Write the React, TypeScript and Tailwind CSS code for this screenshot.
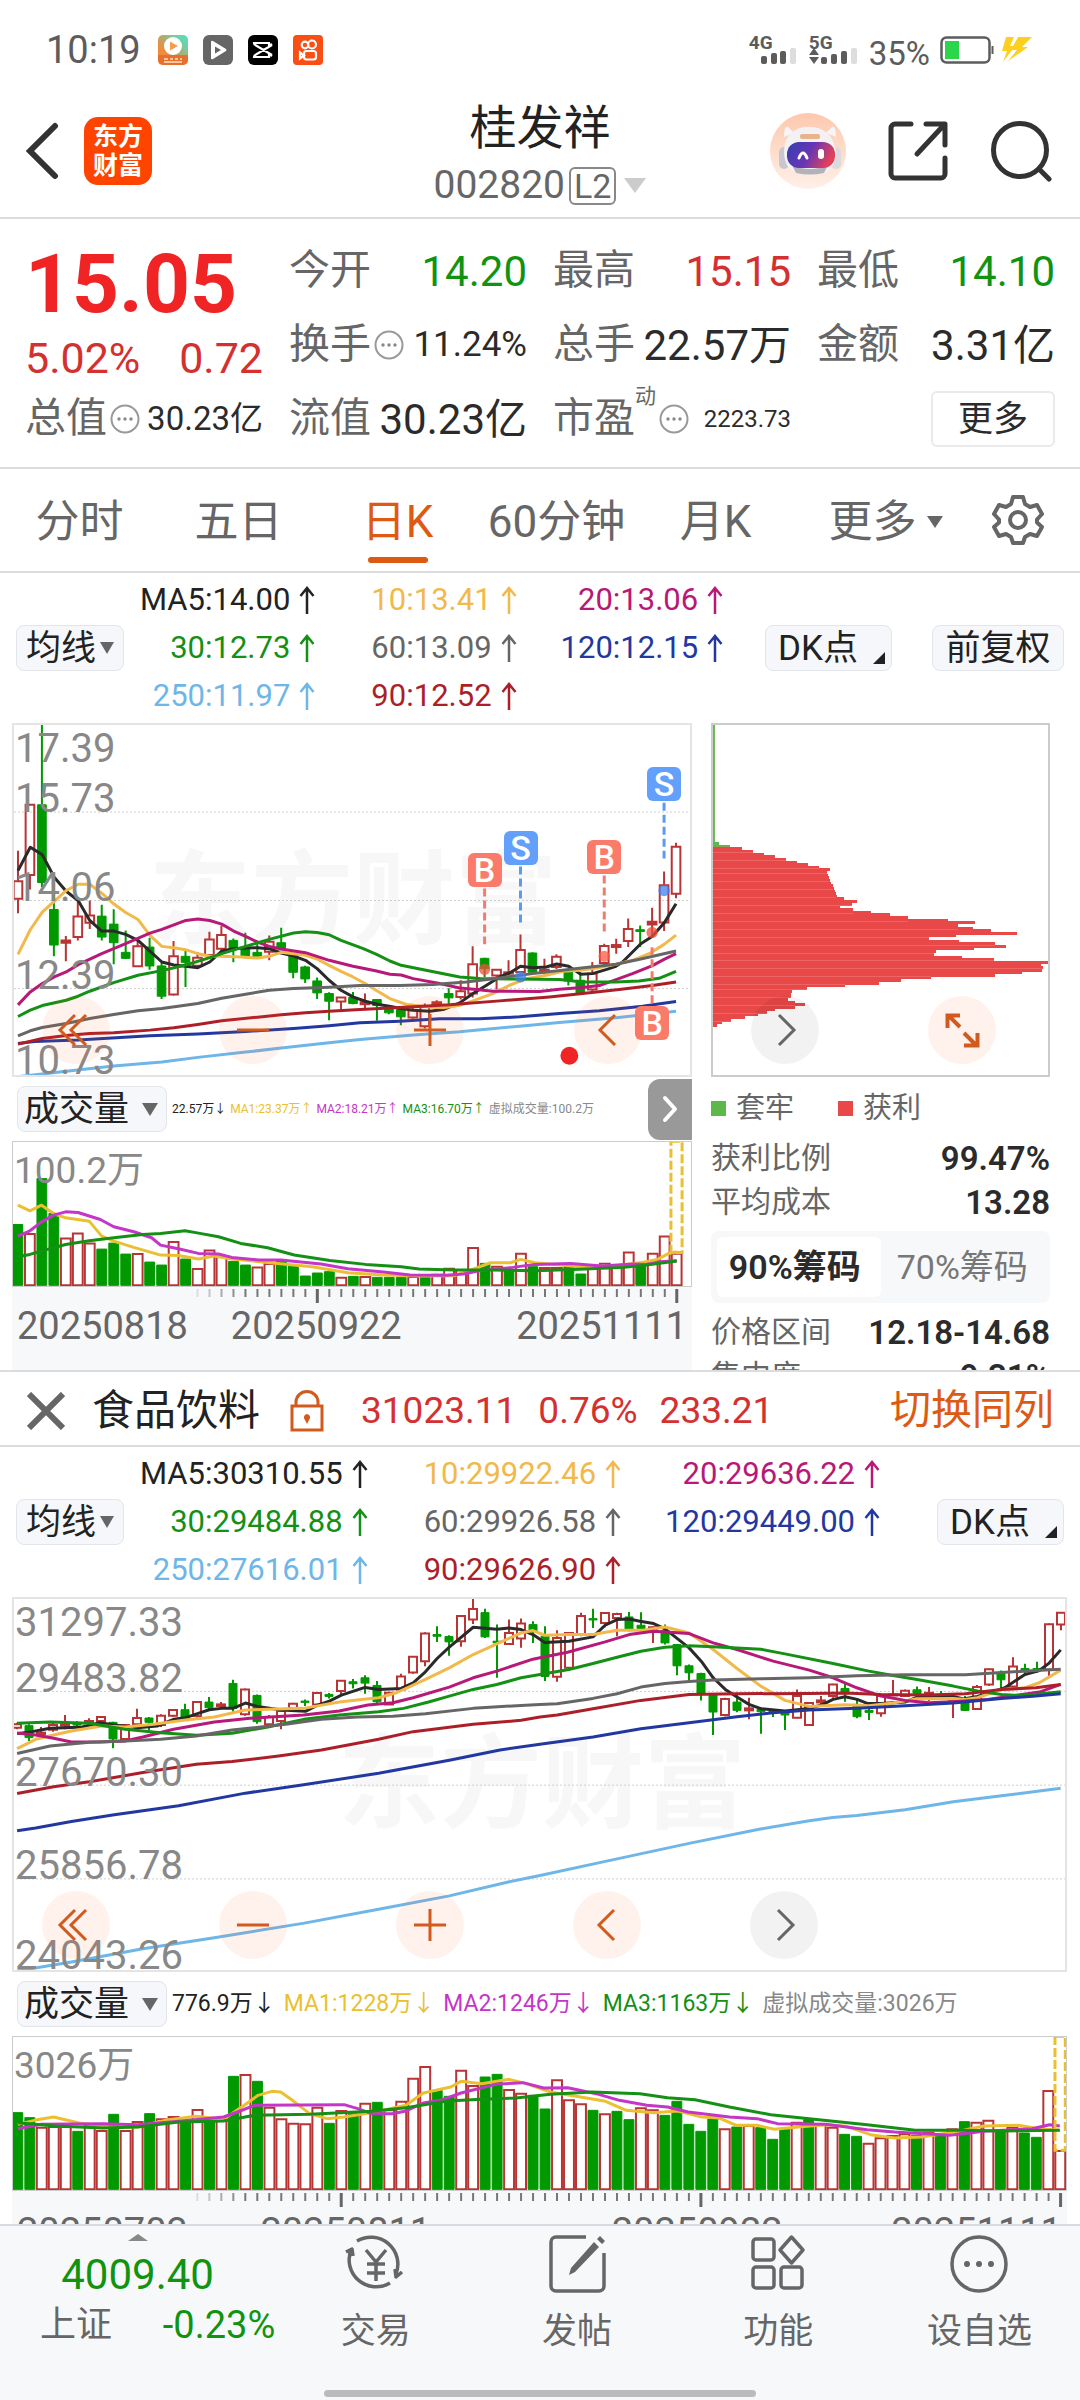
import type { ReactNode } from "react";

type Candle = [up: 0 | 1, top: number, bottom: number, high: number, low: number];
type Bar = [up: 0 | 1, top: number];
type Point = [number, number];

const RED = "#b93434";
const GREEN = "#009a00";

/* Turns "x,y x,y" into points, scaled and shifted on the x axis. */
const pts = (s: string, scale = 1, shift = 0): Point[] =>
  s.split(" ").map((p) => {
    const [x, y] = p.split(",").map(Number);
    return [x / scale + shift, y];
  });

const toPath = (points: Point[]) =>
  points.map(([x, y], i) => `${i ? "L" : "M"}${x.toFixed(1)} ${y}`).join("");

const dailyCandles: Candle[] = [
  [1, 512, 565, 420, 608], [1, 282, 493, 282, 537], [0, 282, 516, 39, 530], [0, 597, 704, 515, 738],
  [1, 690, 697, 677, 753], [1, 618, 680, 570, 690], [1, 615, 637, 570, 656], [0, 617, 680, 583, 690],
  [0, 641, 697, 596, 762], [0, 726, 744, 660, 746], [1, 708, 768, 690, 768], [0, 710, 767, 682, 778],
  [0, 767, 858, 757, 866], [1, 738, 853, 692, 856], [0, 738, 756, 720, 830], [1, 742, 766, 725, 768],
  [1, 687, 734, 664, 745], [1, 674, 715, 646, 720], [0, 690, 716, 684, 756], [0, 716, 740, 667, 744],
  [0, 726, 740, 690, 742], [1, 694, 724, 675, 750], [0, 697, 714, 652, 720], [0, 734, 786, 732, 804],
  [0, 770, 806, 766, 818], [0, 812, 848, 802, 866], [0, 850, 873, 846, 930], [1, 862, 874, 860, 898],
  [0, 862, 880, 845, 882], [1, 876, 882, 850, 900], [0, 868, 886, 868, 932], [0, 890, 908, 886, 912],
  [0, 898, 920, 896, 945], [1, 900, 922, 885, 926], [1, 890, 948, 880, 955], [1, 876, 884, 870, 886],
  [0, 850, 863, 834, 882], [1, 843, 860, 810, 868], [1, 762, 850, 708, 862], [0, 744, 775, 742, 800],
  [1, 778, 796, 776, 838], [1, 786, 790, 750, 795], [1, 719, 785, 672, 790], [0, 728, 786, 726, 790],
  [1, 778, 786, 745, 790], [1, 739, 770, 732, 776], [0, 785, 812, 780, 826], [0, 810, 848, 785, 850],
  [1, 790, 838, 755, 845], [1, 707, 758, 700, 765], [1, 704, 710, 685, 730], [1, 656, 692, 624, 710],
  [0, 658, 663, 645, 710], [1, 634, 642, 592, 680], [1, 524, 636, 483, 662], [1, 408, 550, 396, 563],
];

const dailyLines: [string, string][] = [
  ["#6fb6e8", "51,1100 196,1084 339,1068 484,1056 592,1042 736,1026 843,1014 987,998 1080,988 1240,975 1380,965 1560,948 1680,937 1850,923 1950,912 2031,903"],
  ["#2238a0", "51,1000 100,994 232,990 448,977 592,972 736,964 880,955 987,947 1080,938 1200,933 1320,926 1440,926 1560,920 1680,910 1800,902 1930,888 2031,874"],
  ["#2a2a2a", "51,480 88,410 124,432 160,500 196,542 232,570 267,630 303,662 339,662 375,672 412,690 448,722 484,755 520,764 556,768 592,772 628,755 664,722 700,715 736,713 772,712 807,715 843,728 880,737 916,750 951,775 987,810 1023,840 1059,860 1096,873 1132,882 1168,888 1204,895 1240,900 1290,903 1330,898 1380,878 1420,850 1456,828 1500,800 1530,788 1563,768 1600,772 1640,770 1672,761 1708,768 1744,792 1780,790 1820,778 1850,768 1870,755 1925,700 1959,678 1995,638 2031,580"],
  ["#f2b94a", "51,732 88,658 124,605 160,573 196,540 232,521 267,521 303,548 339,580 375,606 412,627 448,675 484,708 520,712 555,718 592,730 628,738 664,738 724,740 772,743 807,738 843,726 880,730 916,735 951,746 987,765 1023,783 1059,800 1096,820 1132,842 1170,865 1220,883 1280,890 1330,893 1380,885 1420,872 1480,850 1530,825 1580,805 1640,795 1690,783 1740,780 1800,772 1850,762 1900,750 1950,730 1995,702 2031,674"],
  ["#b81878", "51,884 88,845 124,820 160,800 196,785 232,763 303,730 375,700 448,668 484,657 556,630 592,626 628,630 664,641 700,662 736,678 772,695 807,708 843,716 916,727 987,750 1059,768 1130,782 1170,792 1204,794 1240,805 1320,820 1380,833 1430,838 1480,843 1620,844 1680,837 1750,832 1800,826 1840,812 1900,790 1960,766 1995,747 2031,730"],
  ["#149014", "51,919 88,900 124,886 196,870 232,858 267,843 339,817 412,795 484,781 556,764 628,742 664,730 736,708 807,687 880,668 916,664 951,666 987,673 1023,690 1090,715 1130,732 1170,752 1204,765 1260,776 1320,788 1380,800 1440,805 1540,806 1680,808 1750,815 1850,815 1920,812 1980,804 2031,783"],
  ["#666666", "51,977 88,962 124,952 196,940 267,925 339,913 412,902 484,895 592,880 664,864 736,852 807,840 880,835 987,831 1080,826 1200,826 1300,823 1400,815 1500,803 1600,790 1740,774 1850,762 1925,746 2031,722"],
  ["#ad1f28", "51,1002 124,985 196,976 267,970 339,968 448,960 520,953 592,943 664,932 772,921 843,914 916,908 987,903 1080,898 1200,892 1350,884 1500,872 1650,860 1750,850 1860,838 1960,826 2031,815"],
];

const sectorCandles: Candle[] = [
  [1, 430, 440, 425, 445], [0, 434, 470, 430, 480], [1, 455, 459, 438, 460], [1, 432, 446, 425, 452],
  [1, 430, 434, 402, 445], [0, 426, 432, 420, 435], [1, 420, 426, 412, 430], [1, 408, 420, 405, 422],
  [0, 424, 474, 422, 502], [1, 432, 474, 430, 476], [1, 411, 430, 383, 435], [0, 411, 424, 408, 448],
  [1, 404, 432, 400, 438], [1, 387, 404, 384, 408], [0, 386, 412, 368, 418], [1, 363, 405, 360, 410],
  [0, 363, 380, 348, 385], [1, 370, 375, 363, 380], [0, 307, 382, 296, 392], [1, 325, 400, 322, 404],
  [0, 343, 422, 340, 428], [1, 408, 430, 402, 432], [1, 390, 420, 385, 445], [1, 368, 382, 365, 385],
  [0, 360, 364, 355, 375], [1, 336, 370, 334, 372], [0, 340, 346, 336, 352], [1, 299, 330, 297, 340],
  [0, 302, 308, 294, 322], [0, 290, 306, 282, 338], [0, 313, 362, 300, 366], [1, 335, 370, 333, 370],
  [1, 286, 325, 278, 330], [1, 227, 274, 225, 278], [1, 157, 240, 153, 255], [0, 160, 165, 135, 182],
  [0, 166, 182, 162, 224], [1, 104, 180, 102, 197], [1, 83, 115, 52, 128], [0, 94, 167, 82, 170],
  [0, 180, 185, 130, 290], [1, 155, 188, 115, 190], [1, 127, 172, 112, 200], [0, 130, 150, 120, 185],
  [0, 165, 286, 135, 300], [1, 170, 287, 147, 302], [1, 155, 260, 152, 265], [1, 104, 158, 94, 165],
  [0, 112, 116, 82, 140], [1, 95, 125, 93, 138], [1, 98, 110, 94, 165], [0, 107, 145, 92, 150],
  [0, 132, 142, 93, 150], [1, 138, 148, 135, 185], [0, 148, 185, 130, 190], [0, 190, 254, 188, 282],
  [0, 254, 275, 250, 300], [0, 277, 336, 275, 358], [0, 342, 393, 338, 462], [1, 354, 402, 350, 406],
  [0, 363, 388, 335, 394], [1, 382, 388, 350, 415], [0, 385, 392, 378, 458], [0, 390, 395, 385, 408],
  [0, 396, 402, 392, 447], [1, 345, 410, 325, 412], [1, 366, 432, 364, 434], [1, 358, 364, 345, 372],
  [1, 310, 345, 308, 350], [0, 322, 338, 305, 362], [0, 370, 407, 352, 412], [0, 388, 394, 380, 417],
  [1, 345, 397, 340, 407], [1, 340, 343, 297, 345], [1, 329, 345, 325, 348], [0, 326, 337, 316, 350],
  [1, 335, 340, 318, 360], [0, 342, 346, 330, 355], [1, 350, 360, 345, 411], [0, 355, 388, 345, 390],
  [1, 318, 384, 312, 386], [1, 264, 310, 262, 315], [0, 278, 296, 268, 322], [1, 256, 316, 228, 320],
  [0, 262, 268, 248, 280], [0, 262, 266, 242, 275], [1, 129, 265, 127, 285], [1, 94, 130, 92, 147],
];

/* Each sector line is stored in two halves with their own horizontal scale. */
const sectorLines: [string, string, string][] = [
  ["#6fb6e8", "48,1172 200,1145 400,1105 600,1072 852,1028 1060,986 1258,946 1420,905", "0,885 200,840 433,788 640,745 782,720 850,710 920,704 1060,687 1200,663 1340,645 1512,622"],
  ["#2a2a2a", "48,458 90,452 140,442 182,440 230,438 280,425 320,432 385,440 440,435 486,415 520,410 555,397 586,386 620,382 652,382 687,366 721,376 788,387 855,391 889,372 922,360 956,342 1022,319 1060,325 1123,322 1157,305 1191,272 1224,232 1258,198 1325,138 1391,144 1425,140 1459,145 1492,160", "14,184 84,180 154,167 189,132 224,115 259,113 290,120 330,127 363,143 433,200 468,240 503,290 538,325 572,348 607,370 641,383 711,390 782,382 817,372 851,355 886,347 921,355 950,367 990,367 1060,363 1095,348 1165,345 1200,346 1230,354 1270,346 1320,330 1350,320 1408,280 1450,268 1479,245 1512,206"],
  ["#f2b94a", "48,503 100,475 150,462 200,450 285,435 350,438 430,430 520,417 600,408 650,396 687,387 750,385 850,382 950,363 1000,357 1060,350 1110,335 1157,312 1191,295 1258,260 1325,220 1391,188 1459,155 1492,148", "14,162 84,160 154,160 224,147 300,147 363,137 433,155 503,205 572,262 641,315 711,358 782,376 886,371 955,374 1025,366 1095,353 1200,352 1235,355 1270,350 1340,325 1408,320 1450,305 1512,267"],
  ["#b81878", "48,456 100,462 150,472 200,483 280,483 350,480 400,468 486,445 600,423 700,412 850,402 950,390 1030,372 1100,365 1157,350 1258,318 1325,290 1391,270 1492,234", "0,230 80,213 189,182 259,160 330,150 433,157 503,185 572,205 677,240 782,267 851,290 920,320 990,345 1060,358 1130,365 1200,362 1300,355 1400,340 1450,333 1512,310"],
  ["#149014", "48,427 140,423 250,427 350,445 450,455 550,463 650,457 750,438 850,415 950,402 1060,392 1130,382 1200,363 1258,345 1325,325 1391,310 1459,290", "0,280 84,265 154,247 224,228 293,210 363,198 433,194 503,197 641,204 711,218 851,247 955,270 1025,283 1095,295 1200,315 1270,330 1340,340 1400,344 1512,332"],
  ["#666666", "48,518 140,495 250,484 350,480 450,475 550,465 650,447 800,430 900,415 1000,408 1100,406 1191,398 1325,382 1459,373", "0,370 50,368 154,352 224,338 293,318 363,307 433,301 503,297 641,293 782,290 920,284 1060,281 1235,281 1340,274 1440,268 1512,264"],
  ["#ad1f28", "48,638 150,618 250,603 400,575 550,550 650,542 780,525 900,507 1060,475 1157,452 1325,430 1459,418", "0,408 50,402 154,383 293,358 433,340 572,338 782,337 886,336 990,340 1130,342 1235,338 1340,325 1440,320 1512,310"],
  ["#2238a0", "48,750 100,742 200,722 320,702 500,675 687,637 850,612 1060,577 1258,538 1400,507", "0,490 154,468 293,443 433,425 572,407 677,395 782,387 920,382 1060,374 1200,366 1340,352 1440,345 1512,338"],
];

const dailyVolume: Bar[] = [
  [0, 463], [1, 490], [0, 325], [0, 430], [1, 503], [1, 488], [1, 518], [0, 537], [0, 519], [0, 552],
  [1, 550], [0, 576], [0, 585], [1, 514], [0, 567], [1, 595], [1, 539], [1, 558], [0, 574], [0, 585],
  [1, 590], [1, 580], [0, 573], [0, 588], [0, 618], [0, 609], [0, 605], [1, 621], [0, 619], [1, 619],
  [0, 622], [0, 622], [0, 622], [1, 619], [0, 622], [1, 612], [1, 594], [1, 598], [1, 532], [0, 580],
  [1, 588], [0, 602], [1, 549], [0, 590], [1, 592], [1, 592], [0, 588], [0, 612], [1, 592], [1, 579],
  [1, 585], [1, 545], [0, 580], [1, 549], [1, 497], [1, 549],
];

const dailyVolumeLines: [string, string][] = [
  ["#ebc030", "40,405 67,422 93,405 120,430 147,443 200,453 228,498 255,513 300,532 360,555 400,556 445,567 480,558 520,567 600,577 700,590 780,608 860,615 940,618 1020,617 1060,598 1100,578 1145,578 1168,568 1200,578 1300,590 1380,587 1440,577 1475,568 1500,550 1518,545"],
  ["#c436c8", "40,498 67,482 93,455 120,435 147,425 175,427 225,448 255,470 300,485 340,503 360,525 400,536 445,550 490,552 520,562 580,570 630,570 720,582 780,596 860,606 920,615 1000,616 1040,612 1080,601 1150,592 1200,583 1280,580 1350,588 1420,582 1450,583 1480,575 1518,572"],
  ["#149014", "40,560 67,553 100,540 147,523 200,512 260,502 320,493 360,490 415,482 445,489 490,500 540,520 600,533 660,555 740,571 820,583 900,590 940,597 1020,600 1100,600 1200,602 1300,598 1400,592 1450,585 1518,573"],
];

const sectorVolume: Bar[] = [
  [0, 427], [0, 442], [1, 470], [1, 468], [1, 468], [0, 483], [1, 465], [1, 480], [0, 432], [1, 480],
  [1, 453], [0, 430], [1, 445], [1, 438], [0, 450], [1, 417], [0, 450], [1, 440], [0, 318], [1, 312],
  [0, 333], [1, 410], [1, 445], [1, 458], [1, 460], [1, 410], [0, 459], [1, 420], [0, 430], [1, 398],
  [0, 396], [1, 418], [1, 392], [1, 323], [1, 288], [0, 360], [0, 378], [1, 299], [1, 345], [0, 320],
  [0, 312], [1, 357], [1, 368], [0, 375], [0, 416], [1, 328], [1, 388], [1, 400], [0, 420], [1, 430],
  [0, 423], [0, 448], [1, 412], [1, 418], [0, 435], [0, 393], [0, 462], [0, 483], [0, 446], [1, 475],
  [0, 470], [1, 465], [0, 472], [0, 507], [0, 475], [1, 455], [0, 448], [1, 462], [1, 470], [0, 492],
  [0, 498], [1, 518], [1, 502], [1, 495], [1, 490], [0, 495], [1, 485], [0, 495], [1, 475], [0, 454],
  [1, 455], [1, 449], [0, 480], [1, 470], [0, 488], [0, 501], [1, 360], [1, 540],
];

const sectorVolumeLines: [string, string][] = [
  ["#ebc030", "26,462 50,450 78,440 115,458 160,470 200,470 240,450 285,438 325,447 355,405 375,375 395,363 408,365 425,390 450,430 475,445 500,440 530,430 560,418 590,405 615,368 655,350 670,333 700,340 722,333 740,327 765,340 800,365 850,382 880,393 910,420 950,427 985,422 1020,440 1045,443 1070,465 1100,465 1125,477 1160,470 1200,463 1230,468 1265,493 1300,503 1340,500 1370,490 1400,480 1430,467 1480,465 1510,475 1540,480"],
  ["#c436c8", "26,475 60,462 150,460 200,463 260,453 325,440 345,425 370,405 500,403 520,415 540,430 570,430 590,422 615,398 640,390 670,368 720,342 760,337 790,353 825,352 870,372 900,390 940,405 970,410 1000,425 1060,440 1100,445 1130,460 1200,462 1260,478 1300,485 1380,495 1430,483 1500,475 1525,463 1540,467"],
  ["#149014", "26,457 80,467 150,473 200,470 260,455 325,452 370,435 450,432 540,423 590,412 650,392 700,387 750,383 800,372 860,365 930,370 970,382 1010,388 1060,410 1120,433 1190,448 1260,463 1330,480 1400,480 1460,482 1540,480"],
];

/* Chip distribution: right edge of each price step. */
const chipSteps = [
  150, 183, 217, 252, 285, 318, 352, 385, 418, 409, 412, 416, 419, 422, 426, 430, 433, 436, 440, 461, 501, 485,
  449, 487, 544, 601, 655, 777, 858, 806, 851, 906, 987, 800, 719, 810, 918, 951, 856, 740, 735, 820, 915, 1080,
  1060, 1065, 1062, 1002, 920, 726, 633, 567, 463, 348, 304, 300, 301, 290, 312, 341, 313, 250, 226, 201, 160,
  117, 91, 75,
];

function Candles({ data, x0, pitch, half }: { data: Candle[]; x0: number; pitch: number; half: number }) {
  return (
    <>
      {data.map(([up, top, bottom, high, low], i) => {
        const x = x0 + pitch * i;
        const thin = bottom - top < 10;
        const color = up ? RED : GREEN;
        return (
          <g key={i} stroke={color} strokeWidth={2}>
            <path d={`M${x} ${high}V${up && !thin ? top : low}M${x} ${bottom}V${low}`} vectorEffect="non-scaling-stroke" />
            <rect
              x={x - half}
              y={top}
              width={half * 2}
              height={bottom - top}
              fill={up ? (thin ? color : "none") : color}
              strokeWidth={up ? 2 : 1}
              vectorEffect="non-scaling-stroke"
            />
          </g>
        );
      })}
    </>
  );
}

function Line({ color, points }: { color: string; points: Point[] }) {
  return (
    <path
      d={toPath(points)}
      fill="none"
      stroke={color}
      strokeWidth={3}
      strokeLinejoin="round"
      vectorEffect="non-scaling-stroke"
    />
  );
}

function Volume({
  data, lines, x0, pitch, half, base, viewBox, limit,
}: {
  data: Bar[]; lines: [string, string][]; x0: number; pitch: number; half: number; base: number; viewBox: string; limit: number[];
}) {
  const [lx, ly, lw, lh] = limit;
  return (
    <svg className="block h-full w-full" viewBox={viewBox} preserveAspectRatio="none" aria-hidden="true">
      {data.map(([up, top], i) => (
        <rect
          key={i}
          x={x0 + pitch * i - half}
          y={up ? top + 2 : top}
          width={half * 2}
          height={base - top - (up ? 2 : 0)}
          fill={up ? "#ffffff" : GREEN}
          stroke={up ? RED : GREEN}
          strokeWidth={up ? 2 : 1}
          vectorEffect="non-scaling-stroke"
        />
      ))}
      {lines.map(([color, s]) => (
        <Line key={color} color={color} points={pts(s)} />
      ))}
      <rect
        x={lx} y={ly} width={lw} height={lh}
        fill="none" stroke="#ebc030" strokeWidth={3} strokeDasharray="9 3" vectorEffect="non-scaling-stroke"
      />
    </svg>
  );
}

function Ticks({ count, from, major, x0, pitch, viewBox }: { count: number; from: number; major: number[]; x0: number; pitch: number; viewBox: string }) {
  return (
    <svg className="block h-4 w-full" viewBox={viewBox} preserveAspectRatio="none" aria-hidden="true">
      {Array.from({ length: count - from }, (_, k) => k + from).map((i) => {
        const big = major.includes(i);
        return (
          <path
            key={i}
            d={`M${x0 + pitch * i} 2V${big ? 16 : 10}`}
            stroke={big ? "#666666" : "#777777"}
            strokeWidth={big ? 3 : 2}
            opacity={Math.min(1, (i - from + 1) / 5)}
            vectorEffect="non-scaling-stroke"
          />
        );
      })}
    </svg>
  );
}

function AxisLabel({ y, children }: { y: number; children: ReactNode }) {
  return (
    <span className="absolute left-[1px] -translate-y-1/2 text-[40px] leading-none text-[#888888]" style={{ top: y }}>
      {children}
    </span>
  );
}

function Watermark({ className }: { className: string }) {
  return (
    <span aria-hidden="true" className={`absolute text-[102px] leading-none font-bold whitespace-nowrap text-[#f7f7f7] ${className}`}>
      东方财富
    </span>
  );
}

const glyphs: Record<string, ReactNode> = {
  first: <path d="M23 19 8 34l15 15M34 19 19 34l15 15" transform="translate(10 0)" />,
  minus: <path d="M18 34h32" />,
  plus: <path d="M18 34h32M34 18v32" />,
  prev: <path d="M41 19 26 34l15 15" />,
  next: <path d="M28 19l15 15-15 15" />,
  expand: <path d="M32 31 20 19M19.500 32V19.500H32M36 37l12 12M36 49.500h13.500V37" strokeWidth={4} />,
};

function RoundButton({ kind, label, grey }: { kind: string; label: string; grey?: boolean }) {
  return (
    <button
      type="button"
      aria-label={label}
      className={`size-[68px] shrink-0 rounded-full ${grey ? "bg-black/5 text-[#666666]" : "bg-[#ff5a14]/8 text-[#d25a1e]"}`}
    >
      <svg viewBox="0 0 68 68" className="size-full" fill="none" stroke="currentColor" strokeWidth={3}>
        {glyphs[kind]}
      </svg>
    </button>
  );
}

function Info() {
  return (
    <svg viewBox="0 0 30 30" className="mx-[3px] size-[30px] shrink-0" fill="none" stroke="#999999" strokeWidth={2} aria-hidden="true">
      <circle cx="15" cy="15" r="13.500" />
      <g fill="#888888" stroke="none">
        <circle cx="9" cy="15" r="1.700" />
        <circle cx="15" cy="15" r="1.700" />
        <circle cx="21" cy="15" r="1.700" />
      </g>
    </svg>
  );
}

function Stat({ label, info, value, tone = "text-[#2b2b2b]", size = "text-[42px]" }: { label: string; info?: boolean; value: string; tone?: string; size?: string }) {
  return (
    <div className="flex h-[74px] items-center whitespace-nowrap">
      <dt className="flex items-center text-[41px] text-[#666666]">
        {label}
        {info && <Info />}
      </dt>
      <dd className={`ml-auto ${size} ${tone}`}>{value}</dd>
    </div>
  );
}

function Down({ className }: { className: string }) {
  return (
    <svg viewBox="0 0 16 12" className={className} fill="currentColor" preserveAspectRatio="none" aria-hidden="true">
      <path d="M0 0h16L8 12z" />
    </svg>
  );
}

const chipButton = "flex h-[46px] shrink-0 items-center rounded-lg border border-[#e2e5ea] bg-[#f6f7fa] text-[35px] leading-none text-[#222222]";

function Averages({ rows, right }: { rows: [string, string][]; right: ReactNode }) {
  return (
    <div className="flex h-[150px] items-center px-4">
      <button type="button" className={`${chipButton} w-[108px] justify-center gap-1`}>
        均线
        <Down className="h-3 w-[14px] text-[#666666]" />
      </button>
      <ul className="ml-4 grid grid-cols-[auto_auto_auto] gap-x-11 text-right text-[31px] leading-[48px] whitespace-nowrap">
        {rows.map(([text, tone], i) => (
          <li key={text} className={`flex items-center justify-end gap-[9px] ${tone} ${i % 3 === 1 ? "pl-3" : ""}`}>
            {text}
            <svg viewBox="0 0 16 28" className="h-7 w-4" fill="none" stroke="currentColor" strokeWidth="2.500" role="img" aria-label="上升">
              <path d="M8 28V2M1.500 10 8 2l6.500 8" />
            </svg>
          </li>
        ))}
      </ul>
      <div className="ml-auto flex gap-10">{right}</div>
    </div>
  );
}

function DkButton() {
  return (
    <button type="button" className={`${chipButton} w-[127px] justify-between pr-[6px] pl-3`}>
      DK点
      <svg viewBox="0 0 12 12" className="mt-5 size-3" aria-hidden="true">
        <path d="M12 0v12H0z" fill="#222222" />
      </svg>
    </button>
  );
}

function VolumeHead({ items, size }: { items: [string, string, string][]; size: string }) {
  return (
    <>
      <button type="button" className={`${chipButton} ml-[5px] w-[150px] justify-between pr-2 pl-[6px]`}>
        成交量
        <Down className="h-[13px] w-4 text-[#666666]" />
      </button>
      <p className={`ml-[5px] flex whitespace-nowrap ${size}`}>
        {items.map(([text, arrow, tone]) => (
          <span key={text} className={tone}>
            {text}
            {arrow}
          </span>
        ))}
      </p>
    </>
  );
}

function StatusBar() {
  return (
    <div className="flex h-[100px] items-center pr-12 pl-[46px] text-[#5c5c5c]">
      <span className="text-[38px] leading-none">10:19</span>
      <div className="ml-[17px] flex gap-[15px]">
        <svg viewBox="0 0 30 30" className="size-[30px]" aria-hidden="true">
          <defs>
            <linearGradient id="app" x1="0" y1="1" x2="1" y2="0">
              <stop offset="0.300" stopColor="#f28a3c" />
              <stop offset="0.850" stopColor="#5fd8b4" />
            </linearGradient>
          </defs>
          <rect width="30" height="30" rx="5" fill="url(#app)" />
          <path d="M0 20h30v5a5 5 0 0 1-5 5H5a5 5 0 0 1-5-5z" fill="#e8702e" />
          <circle cx="15" cy="11" r="9" fill="#fff" />
          <path d="M12 6.500 20 11l-8 4.500z" fill="#f0a04a" />
          <path d="M6 24h4M12 24h3M17 24h3M22 24h2M6 27h18" stroke="#ffe3c8" strokeWidth="1.500" />
        </svg>
        <svg viewBox="0 0 30 30" className="size-[30px]" aria-hidden="true">
          <rect width="30" height="30" rx="6" fill="#666" />
          <path d="M8 7q0-2 2-1l13 8q1 1 0 2l-13 8q-2 1-2-1z" fill="#fff" />
          <path d="M12 11.500 18 15l-6 3.500z" fill="#666" />
        </svg>
        <svg viewBox="0 0 30 30" className="size-[30px]" aria-hidden="true">
          <rect width="30" height="30" rx="6" fill="#000" />
          <path d="M24 10 8 19.500q-2 1-2 2.500h15v-3l3 2M24 20 8 10.500Q6 9.500 6 8h15v3l3-2" fill="none" stroke="#fff" strokeWidth="2.200" />
        </svg>
        <svg viewBox="0 0 30 30" className="size-[30px]" fill="none" stroke="#fff" strokeWidth="2.200" aria-hidden="true">
          <rect width="30" height="30" rx="4" fill="#fa4f14" stroke="none" />
          <circle cx="12" cy="10" r="3.300" />
          <circle cx="19" cy="9.500" r="4" />
          <rect x="11" y="16" width="12" height="8.500" rx="2.500" />
          <path d="M11 20.500 7 17.500v6z" />
        </svg>
      </div>
      <div className="ml-auto flex items-center">
        <div className="relative h-9 w-[60px]">
          <span className="block text-[19px] leading-[22px] font-bold">4G</span>
          <svg viewBox="0 0 36 16" className="absolute right-3 bottom-1 h-4 w-9" fill="currentColor" aria-hidden="true">
            <rect x="0" y="8" width="6" height="8" rx="2" />
            <rect x="10" y="5" width="6" height="11" rx="2" />
            <rect x="19" y="3" width="6" height="13" rx="2" />
            <rect x="29" y="0" width="6" height="16" rx="2" fill="#dddddd" />
          </svg>
        </div>
        <div className="relative h-9 w-[52px]">
          <span className="block text-[19px] leading-[22px] font-bold">5G</span>
          <svg viewBox="0 0 48 16" className="absolute right-1 bottom-1 h-4 w-12" fill="currentColor" aria-hidden="true">
            <path d="M0 7h10L5 0zM0 9h10l-5 7z" />
            <rect x="12" y="9" width="6" height="7" rx="2" />
            <rect x="22" y="6" width="6" height="10" rx="2" />
            <rect x="32" y="3" width="6" height="13" rx="2" />
            <rect x="42" y="0" width="6" height="16" rx="2" fill="#dddddd" />
          </svg>
        </div>
        <span className="mt-[6px] ml-2 text-[33px] leading-none">35%</span>
        <svg viewBox="0 0 54 28" className="ml-[10px] h-7 w-[54px]" aria-hidden="true">
          <rect x="1.500" y="1.500" width="48" height="25" rx="5" fill="none" stroke="#5c5c5c" strokeWidth="2.500" />
          <rect x="5" y="5" width="14" height="18" fill="#2bd64a" />
          <path d="M52.500 10v8" stroke="#5c5c5c" strokeWidth="2" />
        </svg>
        <svg viewBox="0 0 30 26" className="ml-2 h-[26px] w-[30px]" fill="#fcd01c" aria-hidden="true">
          <path d="M4 0h8L8 9h5L1 25l4-11H0zM16 0h14L20 10h6L6 24l9-11H9z" />
        </svg>
      </div>
    </div>
  );
}

function Header() {
  return (
    <header className="grid h-[119px] grid-cols-[1fr_auto_1fr] items-center border-b-2 border-[#dcdcdc]">
      <div className="flex items-center gap-6 pb-[15px] pl-6">
        <button type="button" aria-label="返回">
          <svg viewBox="0 0 36 58" className="h-[58px] w-9" fill="none" stroke="#333333" strokeWidth="6" strokeLinecap="round">
            <path d="M31 4 6 29l25 25" />
          </svg>
        </button>
        <div className="flex size-[68px] flex-col items-center justify-center rounded-[14px] bg-[#ff4400] text-[25px] leading-[29px] font-bold text-white">
          <span>东方</span>
          <span>财富</span>
        </div>
      </div>
      <div className="flex flex-col items-center">
        <h1 className="text-[47px] leading-[54px] text-[#222222]">桂发祥</h1>
        <button type="button" className="flex h-[62px] items-center text-[39px] text-[#666666]">
          002820
          <span className="ml-1 flex h-[38px] items-center rounded-md border-2 border-[#888888] px-[3px] text-[34px] leading-none">L2</span>
          <Down className="ml-2 h-[15px] w-[22px] text-[#cccccc]" />
        </button>
      </div>
      <div className="flex items-center justify-end pr-7 pb-[15px]">
        <button type="button" aria-label="智能助手" className="mr-[42px]">
          <svg viewBox="0 0 76 76" className="size-[76px]">
            <defs>
              <linearGradient id="halo" x1="0" y1="0" x2="0" y2="1">
                <stop offset="0" stopColor="#fdc8ae" />
                <stop offset="1" stopColor="#fff0e8" />
              </linearGradient>
              <linearGradient id="visor" x1="0" y1="0" x2="1" y2="0.300">
                <stop offset="0" stopColor="#3340b0" />
                <stop offset="0.550" stopColor="#6a35b5" />
                <stop offset="1" stopColor="#e0405a" />
              </linearGradient>
            </defs>
            <circle cx="38" cy="38" r="38" fill="url(#halo)" />
            <path d="M14 24q0-12 4-10l6 6zM66 24q0-12-4-10l-6 6z" fill="#f6f4f6" />
            <rect x="9" y="34" width="10" height="22" rx="5" fill="#c9c6cf" />
            <rect x="61" y="34" width="10" height="22" rx="5" fill="#dcd9de" />
            <path d="M14 40q0-22 20-26h10q20 4 22 26-1 16-12 20-14 3-28 0-11-4-12-20z" fill="#f3f1f4" />
            <path d="M22 52q18 8 36 0l-4 8q-14 3-28 0z" fill="#b4b1ba" />
            <rect x="30" y="21" width="20" height="5" rx="2" fill="#e8b48c" />
            <rect x="17" y="29" width="48" height="26" rx="12" fill="url(#visor)" />
            <path d="M29 45q4-10 8 0" fill="none" stroke="#fff" strokeWidth="3" strokeLinecap="round" />
            <rect x="48" y="36" width="6" height="10" rx="3" fill="#fff" />
          </svg>
        </button>
        <button type="button" aria-label="分享" className="mr-[42px]">
          <svg viewBox="0 0 60 60" className="size-[60px]" fill="none" stroke="#333333" strokeWidth="5" strokeLinecap="round" strokeLinejoin="round">
            <path d="M23 3H7a4 4 0 0 0-4 4v46a4 4 0 0 0 4 4h46a4 4 0 0 0 4-4V37M38 3h19v21M56 4 29 33" />
          </svg>
        </button>
        <button type="button" aria-label="搜索">
          <svg viewBox="0 0 62 62" className="size-[62px]" fill="none" stroke="#333333" strokeWidth="5" strokeLinecap="round">
            <circle cx="30" cy="30" r="26.500" />
            <path d="M49 49l10 10" />
          </svg>
        </button>
      </div>
    </header>
  );
}

function Quote() {
  const red = "text-[#d53030]";
  const green = "text-[#109410]";
  return (
    <section className="border-b-2 border-[#dcdcdc] pt-[15px] pb-[11px]">
      <div className="grid grid-cols-4 gap-x-[26px] px-[25px]">
        <div>
          <p className="flex h-[100px] items-center text-[82px] leading-none font-bold text-[#f02424]">15.05</p>
          <p className={`flex h-12 items-center justify-between text-[43px] ${red}`}>
            <span>5.02%</span>
            <span>0.72</span>
          </p>
          <dl>
            <Stat label="总值" info value="30.23亿" size="text-[33px]" />
          </dl>
        </div>
        <dl>
          <Stat label="今开" value="14.20" tone={green} />
          <Stat label="换手" info value="11.24%" size="text-[35px]" />
          <Stat label="流值" value="30.23亿" />
        </dl>
        <dl>
          <Stat label="最高" value="15.15" tone={red} />
          <Stat label="总手" value="22.57万" />
          <div className="flex h-[74px] items-center whitespace-nowrap">
            <dt className="flex items-center text-[41px] text-[#666666]">
              市盈
              <sup className="mb-6 text-[21px] leading-none">动</sup>
              <Info />
            </dt>
            <dd className="ml-auto text-[24px] text-[#2b2b2b]">2223.73</dd>
          </div>
        </dl>
        <div>
          <dl>
            <Stat label="最低" value="14.10" tone={green} />
            <Stat label="金额" value="3.31亿" />
          </dl>
          <div className="flex h-[74px] items-center justify-end">
            <button type="button" className="h-[56px] w-[124px] rounded-md border-2 border-[#eaeaea] text-[35px] leading-none text-[#2b2b2b]">更多</button>
          </div>
        </div>
      </div>
    </section>
  );
}

function Tabs() {
  const tabs = ["分时", "五日", "日K", "60分钟", "月K"];
  return (
    <nav className="grid h-[104px] grid-cols-[159fr_159fr_159fr_159fr_159fr_181fr_104fr] items-stretch border-b-2 border-[#dcdcdc] text-[44px] text-[#666666]">
      {tabs.map((t) =>
        t === "日K" ? (
          <button key={t} type="button" aria-current="page" className="relative pt-1 text-[#de5a12]">
            {t}
            <span className="absolute bottom-2 left-1/2 h-[6px] w-[60px] -translate-x-1/2 rounded-full bg-[#de5a12]" />
          </button>
        ) : (
          <button key={t} type="button" className="pt-1 whitespace-nowrap">{t}</button>
        ),
      )}
      <button type="button" className="flex items-center justify-center gap-[10px] pt-1">
        更多
        <Down className="h-3 w-4" />
      </button>
      <button type="button" aria-label="设置" className="flex items-center justify-center pr-5">
        <svg viewBox="0 0 52 52" className="size-[52px]" fill="none" stroke="currentColor" strokeWidth="4" strokeLinejoin="round">
          <path d="M21 3h10l2 7 5 3 7-2 5 9-5 5.500v3L50 33l-5 9-7-2-5 3-2 6H21l-2-6-5-3-7 2-5-9 5-4.500v-3L2 20l5-9 7 2 5-3z" />
          <circle cx="26" cy="26" r="8" />
        </svg>
      </button>
    </nav>
  );
}

const signals = [
  { kind: "B", x: 1455, y: 476, from: 534, to: 702 },
  { kind: "S", x: 1563, y: 411, from: 468, to: 636 },
  { kind: "B", x: 1815, y: 438, from: 495, to: 663 },
  { kind: "S", x: 1995, y: 219, from: 276, to: 444 },
  { kind: "B", x: 1959, y: 935, from: 711, to: 885 },
];

const signalDots: [number, number, string][] = [
  [1455, 777, "#f0503c"], [1563, 800, "#3c82f0"], [1815, 738, "#ff5a46"], [1995, 540, "#3c82f0"], [1959, 666, "#f0503c"],
];

function DailyChart() {
  return (
    <div className="relative h-[354px] overflow-hidden border-2 border-[#e4e4e4]">
      <Watermark className="top-[125px] left-[135px]" />
      <svg className="absolute inset-0 h-full w-full" viewBox="39 42 2034 1053" preserveAspectRatio="none" aria-hidden="true">
        {[304, 570, 835].map((y) => (
          <path key={y} d={`M39 ${y}H2073`} stroke="#cfcfcf" strokeWidth={1} strokeDasharray="2 2" vectorEffect="non-scaling-stroke" />
        ))}
        <Candles data={dailyCandles} x0={51} pitch={36} half={13} />
        {dailyLines.map(([color, s]) => (
          <Line key={color} color={color} points={pts(s)} />
        ))}
        {signals.map((s) => (
          <path
            key={s.x}
            d={`M${s.x} ${s.from}V${s.to}`}
            stroke={s.kind === "B" ? "#f07c6e" : "#5b9bf0"}
            strokeWidth={3}
            strokeDasharray="8 4"
            vectorEffect="non-scaling-stroke"
          />
        ))}
        {signalDots.map(([x, y, c]) => (
          <circle key={x} cx={x} cy={y} r="17" fill={c} opacity="0.750" />
        ))}
        <circle cx="1710" cy="1037" r="27" fill="#f02424" />
      </svg>
      {signals.map((s) => (
        <span
          key={s.x}
          className={`absolute flex size-[34px] -translate-x-1/2 -translate-y-1/2 items-center justify-center rounded-[6px] text-[34px] leading-none font-medium text-white ${s.kind === "B" ? "bg-[#fb7b6b]" : "bg-[#62a0fb]"}`}
          style={{ left: `${((s.x - 39) / 2034) * 100}%`, top: Math.round((s.y - 42) / 3) }}
        >
          {s.kind}
        </span>
      ))}
      <AxisLabel y={24}>17.39</AxisLabel>
      <AxisLabel y={74}>15.73</AxisLabel>
      <AxisLabel y={163}>14.06</AxisLabel>
      <AxisLabel y={251}>12.39</AxisLabel>
      <AxisLabel y={336}>10.73</AxisLabel>
    </div>
  );
}

function ChipChart() {
  return (
    <svg className="block h-[354px] w-full border-2 border-[#cccccc]" viewBox="63 42 1017 1056" preserveAspectRatio="none" shapeRendering="crispEdges" aria-hidden="true">
      <rect x="63" y="42" width="5" height="354" fill="#6cba58" />
      <rect x="63" y="396" width="19" height="8" fill="#5cb848" />
      <rect x="63" y="404" width="53" height="7" fill="#78a850" />
      <g fill="#e84848">
        {chipSteps.map((x, i) => (
          <rect key={i} x="63" y={411 + i * 7.970} width={x - 63} height="8.200" />
        ))}
      </g>
      {[428, 451, 476, 490, 514, 538, 562, 586, 610, 634, 658, 682, 706, 730, 754, 778, 802, 826, 841, 865, 889, 913, 937].map((y) => {
        const i = Math.floor((y - 411) / 7.970);
        return <path key={y} d={`M63 ${y}H${Math.min(chipSteps[i], chipSteps[Math.max(0, i - 1)])}`} stroke="#ec6464" strokeWidth="1" vectorEffect="non-scaling-stroke" />;
      })}
    </svg>
  );
}

function ChipRow({ label, value }: { label: string; value: string }) {
  return (
    <div className="flex h-11 items-center justify-between whitespace-nowrap">
      <dt className="text-[30px] leading-none text-[#666666]">{label}</dt>
      <dd className="text-[33px] leading-none font-semibold text-[#2b2b2b]">{value}</dd>
    </div>
  );
}

function DailyPanel() {
  return (
    <section className="relative flex h-[649px] gap-[19px] overflow-hidden border-b-2 border-[#dcdcdc] pr-[30px] pl-3">
      <div className="min-w-0 flex-1">
        <DailyChart />
        <div className="flex h-16 items-center">
          <VolumeHead
            size="gap-[4px] text-[12px]"
            items={[
              ["22.57万", "↓", "text-[#222222]"],
              ["MA1:23.37万", "↑", "text-[#ebc030]"],
              ["MA2:18.21万", "↑", "text-[#c436c8]"],
              ["MA3:16.70万", "↑", "text-[#149014]"],
              ["虚拟成交量:100.2万", "", "text-[#888888]"],
            ]}
          />
          <button type="button" aria-label="展开" className="ml-auto flex h-[61px] w-11 shrink-0 items-center justify-center rounded-l-xl bg-[#999999]">
            <svg viewBox="0 0 16 28" className="h-7 w-4" fill="none" stroke="#fff" strokeWidth="4" strokeLinecap="round" strokeLinejoin="round">
              <path d="M3 3l10 11L3 25" />
            </svg>
          </button>
        </div>
        <div className="relative h-[146px] border border-[#cccccc]">
          <Volume
            data={dailyVolume} lines={dailyVolumeLines}
            x0={40} pitch={26.870} half={11} base={646}
            viewBox="29 215 1521 433" limit={[1505, 213, 25, 334]}
          />
          <span className="absolute top-[5px] left-[1px] text-[37px] leading-[48px] text-[#888888]">100.2万</span>
        </div>
        <div className="h-[86px] bg-[#f7f8fa]">
          <Ticks count={56} from={15} major={[25, 55]} x0={13} pitch={26.870} viewBox="0 0 1525 16" />
          <div className="flex px-[5px] text-[38px] leading-[46px] text-[#666666]">
            <span>20250818</span>
            <span className="ml-[43px]">20250922</span>
            <span className="ml-auto">20251111</span>
          </div>
        </div>
      </div>
      <div className="w-[339px] shrink-0">
        <ChipChart />
        <div className="flex h-[59px] items-center pt-1 text-[29px] leading-none text-[#666666]">
          <span className="size-[15px] bg-[#5cb848]" />
          <span className="ml-[10px]">套牢</span>
          <span className="ml-11 size-[15px] bg-[#e84848]" />
          <span className="ml-[10px]">获利</span>
        </div>
        <dl>
          <ChipRow label="获利比例" value="99.47%" />
          <ChipRow label="平均成本" value="13.28" />
        </dl>
        <div className="my-[7px] grid h-[72px] grid-cols-2 rounded-lg bg-[#f7f8fa] p-[6px] text-[34px] leading-none whitespace-nowrap">
          <button type="button" aria-pressed="true" className="rounded-md bg-white pr-2 font-semibold text-[#2b2b2b]">90%筹码</button>
          <button type="button" aria-pressed="false" className="text-[#777777]">70%筹码</button>
        </div>
        <dl>
          <ChipRow label="价格区间" value="12.18-14.68" />
          <ChipRow label="集中度" value="9.31%" />
        </dl>
      </div>
      <div className="absolute top-[273px] right-[84px] left-[42px] flex justify-between">
        <RoundButton kind="first" label="最早" />
        <RoundButton kind="minus" label="缩小" />
        <RoundButton kind="plus" label="放大" />
        <RoundButton kind="prev" label="向左" />
        <RoundButton kind="next" label="向右" grey />
        <RoundButton kind="expand" label="全屏" />
      </div>
    </section>
  );
}

function SectorHeader() {
  return (
    <div className="flex h-[75px] items-center border-b-2 border-[#dcdcdc] pt-1 pr-[26px] pl-[27px] text-[42px] leading-none whitespace-nowrap">
      <button type="button" aria-label="关闭">
        <svg viewBox="0 0 38 38" className="size-[38px]" stroke="#666666" strokeWidth="6">
          <path d="M2 2l34 34M36 2 2 36" />
        </svg>
      </button>
      <h2 className="ml-[27px] text-[#222222]">食品饮料</h2>
      <svg viewBox="0 0 34 42" className="ml-[30px] h-[42px] w-[34px]" fill="none" stroke="#d25a1e" strokeWidth="3" aria-label="锁定">
        <rect x="2" y="16" width="30" height="24" />
        <path d="M6 16v-4a11 10.500 0 0 1 22 0v4" />
        <path d="M17 24a3.500 3.500 0 0 1 2 6l-2 4-2-4a3.500 3.500 0 0 1 2-6z" fill="#d25a1e" stroke="none" />
      </svg>
      <p className="ml-[37px] flex gap-[22px] text-[37px] text-[#d53030]">
        <span>31023.11</span>
        <span>0.76%</span>
        <span>233.21</span>
      </p>
      <button type="button" className="ml-auto text-[41px] text-[#de5a12]">切换同列</button>
    </div>
  );
}

function SectorPanel() {
  return (
    <section className="h-[627px] overflow-hidden pr-[13px] pl-3">
      <div className="relative h-[375px] overflow-hidden border-2 border-[#e4e4e4]">
        <Watermark className="top-[135px] left-[324px]" />
        <svg className="absolute inset-0 h-full w-full" viewBox="14 53 1051 1116" preserveAspectRatio="none" aria-hidden="true">
          {[331, 613, 895].map((y) => (
            <path key={y} d={`M12 ${y}H1067`} stroke="#cfcfcf" strokeWidth={1} strokeDasharray="2 2" vectorEffect="non-scaling-stroke" />
          ))}
          <Candles data={sectorCandles} x0={17} pitch={12} half={4} />
          {sectorLines.map(([color, left, right]) => (
            <Line key={color} color={color} points={[...pts(left, 2.8), ...pts(right, 2.9037, 540)]} />
          ))}
        </svg>
        <AxisLabel y={24}>31297.33</AxisLabel>
        <AxisLabel y={80}>29483.82</AxisLabel>
        <AxisLabel y={174}>27670.30</AxisLabel>
        <AxisLabel y={267}>25856.78</AxisLabel>
        <AxisLabel y={357}>24043.26</AxisLabel>
        <div className="absolute top-[292px] left-7 flex gap-[109px]">
          <RoundButton kind="first" label="最早" />
          <RoundButton kind="minus" label="缩小" />
          <RoundButton kind="plus" label="放大" />
          <RoundButton kind="prev" label="向左" />
          <RoundButton kind="next" label="向右" grey />
        </div>
      </div>
      <div className="flex h-16 items-center">
        <VolumeHead
          size="gap-2 text-[23px]"
          items={[
            ["776.9万", "↓", "text-[#222222]"],
            ["MA1:1228万", "↓", "text-[#ebc030]"],
            ["MA2:1246万", "↓", "text-[#c436c8]"],
            ["MA3:1163万", "↓", "text-[#149014]"],
            ["虚拟成交量:3026万", "", "text-[#888888]"],
          ]}
        />
      </div>
      <div className="relative h-[155px] border border-[#cccccc]">
        <Volume
          data={sectorVolume} lines={sectorVolumeLines}
          x0={26} pitch={17.410} half={7.200} base={657}
          viewBox="19 200 1530 459" limit={[1533, 198, 15, 342]}
        />
        <span className="absolute top-[5px] left-[1px] text-[37px] leading-[48px] text-[#888888]">3026万</span>
      </div>
      <div className="bg-[#f7f8fa]">
        <Ticks count={88} from={15} major={[27, 57, 87]} x0={8} pitch={17.410} viewBox="0 0 1532 16" />
        <div className="flex justify-between px-[5px] pt-[2px] text-[38px] leading-[46px] text-[#666666]">
          <span>20250703</span>
          <span className="-ml-9">20250811</span>
          <span className="ml-[72px]">20250922</span>
          <span>20251111</span>
        </div>
      </div>
    </section>
  );
}

function BottomBar() {
  const items: [string, ReactNode][] = [
    ["交易", (
      <g key="i">
        <path d="M14 8a27 27 0 0 1 39 33M47 50A27 27 0 0 1 8 17M3 19l6-3 1 7M59 39l-6 5-1-8" />
        <path d="M23 17l10 12 10-12M33 29v19M24 31h18M24 40h18" />
      </g>
    )],
    ["发帖", <path key="i" d="M42 4H12a5 5 0 0 0-5 5v44a5 5 0 0 0 5 5h43a5 5 0 0 0 5-5V20" />],
    ["功能", (
      <g key="i">
        <rect x="8" y="6" width="21" height="21" rx="3" />
        <rect x="8" y="34" width="21" height="21" rx="3" />
        <rect x="36" y="34" width="21" height="21" rx="3" />
        <path d="M46.500 4 58 17 46.500 30 35 17z" />
      </g>
    )],
    ["设自选", (
      <g key="i">
        <circle cx="33" cy="31" r="27" />
        <g fill="currentColor" stroke="none">
          <circle cx="21" cy="31" r="3" />
          <circle cx="33" cy="31" r="3" />
          <circle cx="45" cy="31" r="3" />
        </g>
      </g>
    )],
  ];
  return (
    <footer className="relative grid h-[176px] grid-cols-[275fr_201fr_201fr_201fr_201fr] border-t-2 border-[#d8dce2] bg-[#f7f8fa] text-[#666666]">
      <a href="#index" className="flex flex-col items-center">
        <svg viewBox="0 0 20 7" className="mt-2 h-[7px] w-5" fill="#888888" aria-hidden="true">
          <path d="M10 0l10 7H0z" />
        </svg>
        <span className="mt-[6px] text-[42px] leading-[56px] text-[#109410]">4009.40</span>
        <span className="flex w-full items-center justify-between pl-10 leading-[44px]">
          <span className="text-[36px]">上证</span>
          <span className="text-[38px] text-[#109410]">-0.23%</span>
        </span>
      </a>
      {items.map(([label, icon]) => (
        <a key={label} href={`#${label}`} className="flex flex-col items-center pt-[7px]">
          <svg viewBox="0 0 66 62" className="h-[62px] w-[66px]" fill="none" stroke="currentColor" strokeWidth="3.500" strokeLinejoin="round" aria-hidden="true">
            {icon}
            {label === "发帖" && (
              <path d="M50 9l5 5-24 25-6 3 2-7zM53 6l3-3 5 5-3 3z" fill="currentColor" stroke="none" />
            )}
          </svg>
          <span className="mt-3 text-[35px] leading-[50px]">{label}</span>
        </a>
      ))}
      <span className="absolute bottom-[3px] left-1/2 h-[7px] w-2/5 -translate-x-1/2 rounded-full bg-[#bbbbbb]" />
    </footer>
  );
}

export default function App() {
  return (
    <main className="w-full bg-white font-['Roboto','Noto_Sans_CJK_SC',sans-serif]">
      <StatusBar />
      <Header />
      <Quote />
      <Tabs />
      <Averages
        rows={[
          ["MA5:14.00", "text-[#222222]"],
          ["10:13.41", "text-[#f2b94a]"],
          ["20:13.06", "text-[#b81878]"],
          ["30:12.73", "text-[#149014]"],
          ["60:13.09", "text-[#666666]"],
          ["120:12.15", "text-[#2238a0]"],
          ["250:11.97", "text-[#6fb6e8]"],
          ["90:12.52", "text-[#ad1f28]"],
        ]}
        right={
          <>
            <DkButton />
            <button type="button" className={`${chipButton} w-[132px] justify-center`}>前复权</button>
          </>
        }
      />
      <DailyPanel />
      <SectorHeader />
      <Averages
        rows={[
          ["MA5:30310.55", "text-[#222222]"],
          ["10:29922.46", "text-[#f2b94a]"],
          ["20:29636.22", "text-[#b81878]"],
          ["30:29484.88", "text-[#149014]"],
          ["60:29926.58", "text-[#666666]"],
          ["120:29449.00", "text-[#2238a0]"],
          ["250:27616.01", "text-[#6fb6e8]"],
          ["90:29626.90", "text-[#ad1f28]"],
        ]}
        right={<DkButton />}
      />
      <SectorPanel />
      <BottomBar />
    </main>
  );
}
